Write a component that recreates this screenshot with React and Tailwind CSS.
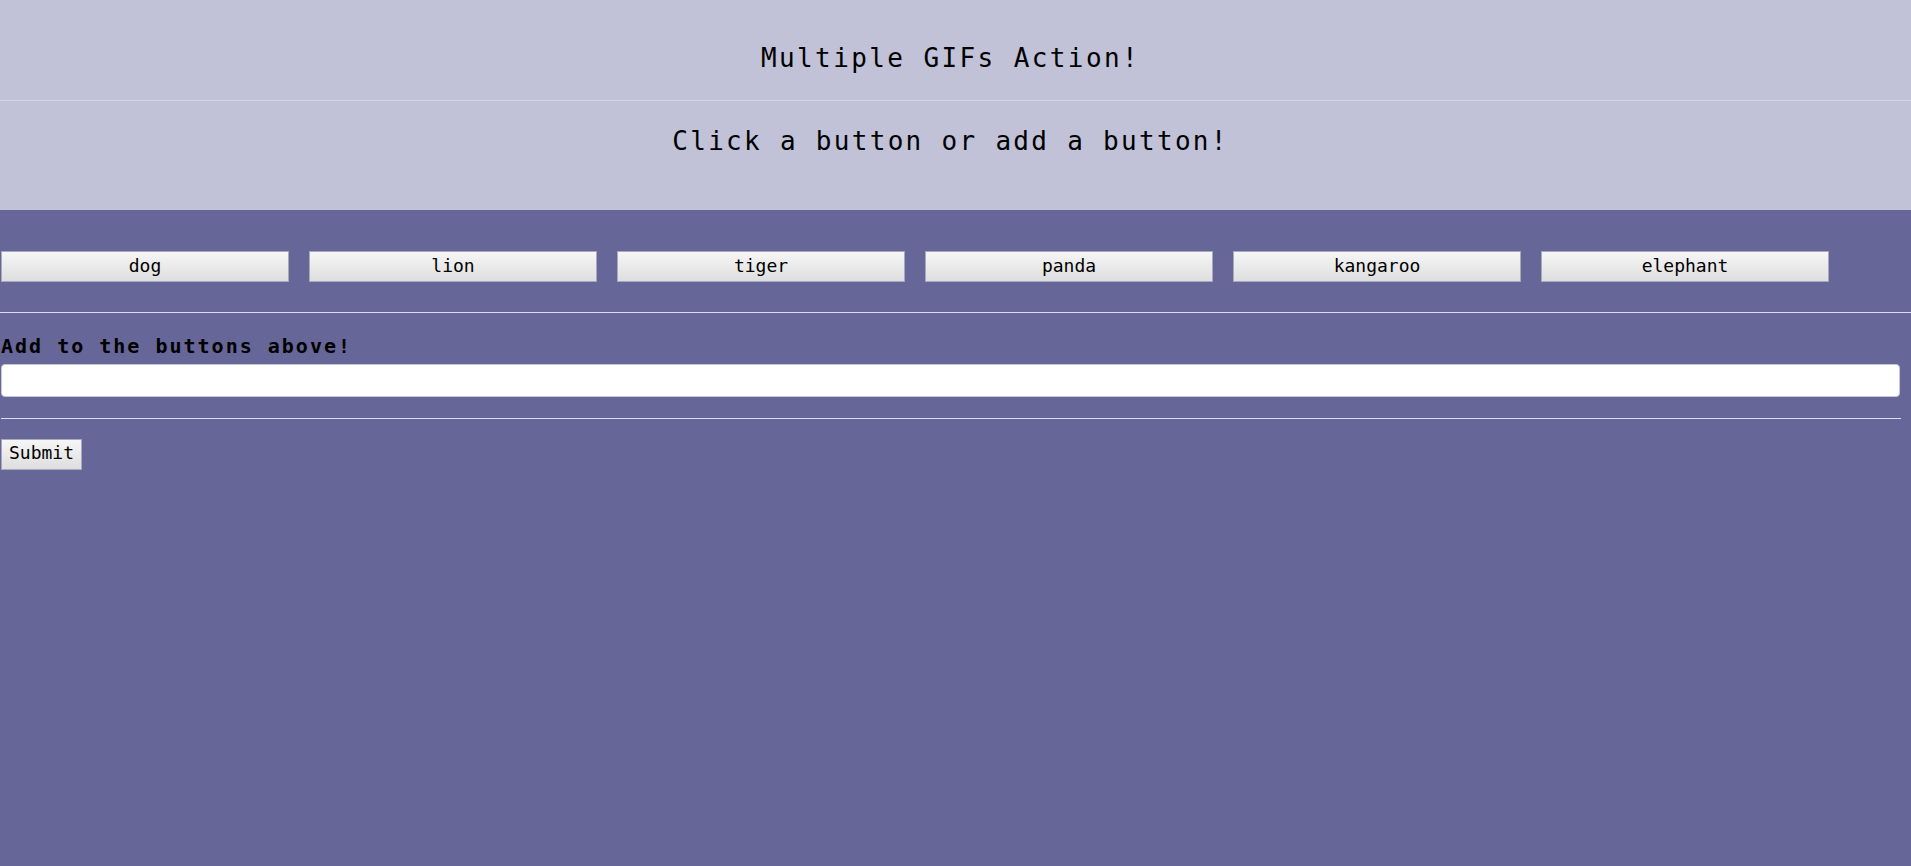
import React from "react";

const animals = ["dog", "lion", "tiger", "panda", "kangaroo", "elephant"];
const mono = { fontFamily: '"DejaVu Sans Mono", "Liberation Mono", monospace' };

export default function App() {
  return (
    <div className="min-h-[866px] w-full bg-[#676699] text-black" style={mono}>
      <header className="bg-[#c1c2d7]">
        <div className="pt-[43px] pb-[27px] pr-[10px] text-center">
          <h1 className="text-[26px] leading-[30px] font-normal tracking-[2.4px]">Multiple GIFs Action!</h1>
        </div>
        <div className="h-px bg-[#d5d6e5]" />
        <div className="pt-[25px] pb-[54px] pr-[10px] text-center">
          <h2 className="text-[26px] leading-[30px] font-normal tracking-[2.3px]">Click a button or add a button!</h2>
        </div>
      </header>

      <div className="flex gap-[20px] pl-px pt-[41px]">
        {animals.map((a) => (
          <button
            key={a}
            className="h-[31px] w-[288px] border border-[#a9a9bd] bg-gradient-to-b from-[#f6f6f6] to-[#dedede] pb-[2px] text-[18px] leading-[20px] text-black"
            style={mono}
          >
            {a}
          </button>
        ))}
      </div>

      <div className="mt-[30px] h-px w-full bg-[#dcdcec]" />

      <form className="w-[1901px] pl-px" onSubmit={(e) => e.preventDefault()}>
        <label className="block pt-[22px] text-[20px] leading-[23px] font-bold tracking-[2px]">
          Add to the buttons above!
        </label>
        <input
          type="text"
          className="mt-[6px] block h-[33px] w-[1899px] rounded-[4px] border border-[#c8c8d8] bg-white px-2 outline-none"
          style={mono}
        />
        <div className="mt-[21px] h-px w-[1900px] bg-[#dcdcec]" />
        <button
          type="submit"
          className="mt-[20px] h-[31px] w-[81px] border border-[#a9a9bd] bg-gradient-to-b from-[#f6f6f6] to-[#dedede] pb-[3px] text-[18px] leading-[20px] text-black"
          style={mono}
        >
          Submit
        </button>
      </form>
    </div>
  );
}
